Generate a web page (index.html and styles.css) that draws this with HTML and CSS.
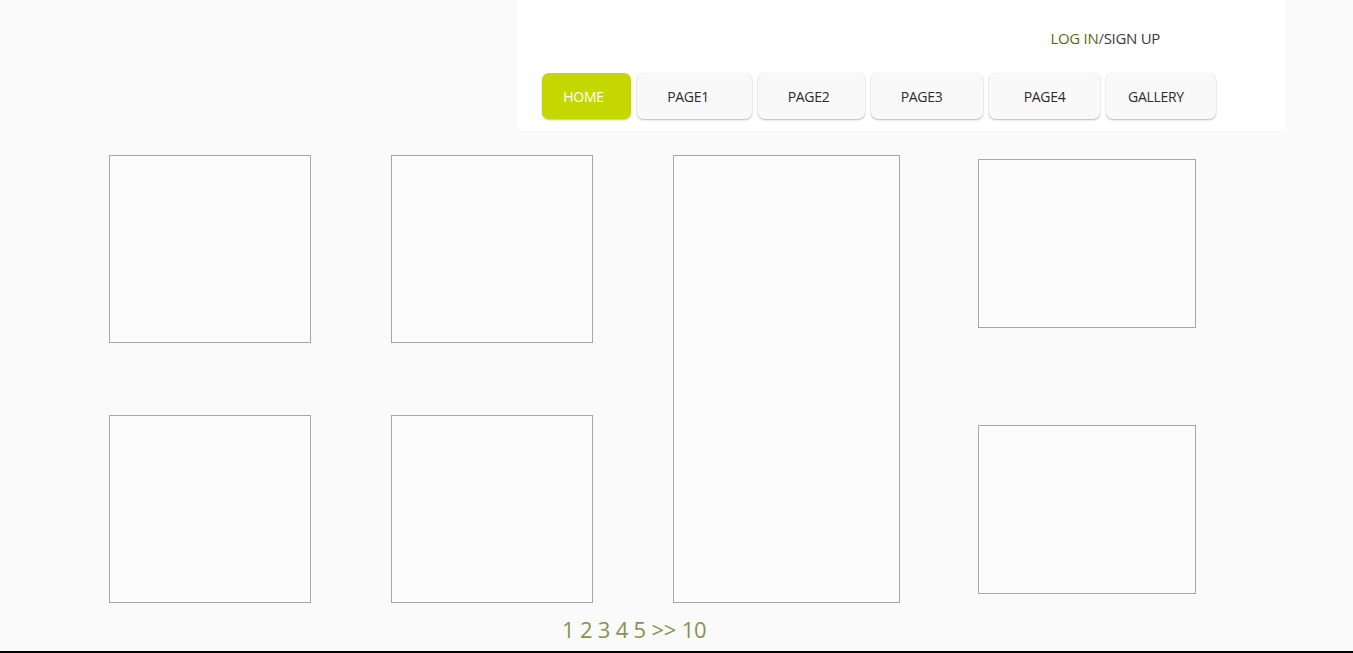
FILE: index.html
```html
<!DOCTYPE html>
<html>
<head>
<meta charset="utf-8">
<title>Gallery</title>
<link rel="stylesheet" href="styles.css">
</head>
<body>
<div class="page">
  <header class="header">
    <div class="auth"><a class="login" href="#">LOG IN</a><span class="sep">/</span><a class="signup" href="#">SIGN UP</a></div>
    <nav class="nav">
      <a class="btn active b-home" href="#">HOME</a>
      <a class="btn b-p1" href="#">PAGE1</a>
      <a class="btn b-p2" href="#">PAGE2</a>
      <a class="btn b-p3" href="#">PAGE3</a>
      <a class="btn b-p4" href="#">PAGE4</a>
      <a class="btn b-gal" href="#">GALLERY</a>
    </nav>
  </header>
  <main class="grid">
    <div class="col col-a">
      <div class="box sq"></div>
      <div class="box sq"></div>
    </div>
    <div class="col col-b">
      <div class="box sq"></div>
      <div class="box sq"></div>
    </div>
    <div class="col col-c">
      <div class="box tall"></div>
    </div>
    <div class="col col-d">
      <div class="box wide"></div>
      <div class="box wide"></div>
    </div>
  </main>
  <div class="pager">1 2 3 4 5 &gt;&gt; 10</div>
  <div class="bottom"></div>
</div>
</body>
</html>
```
FILE: styles.css
```css
html, body {
  margin: 0;
  padding: 0;
}
body {
  background: #fafafa;
  font-family: "Open Sans", "Liberation Sans", sans-serif;
}
.page {
  height: 653px;
  display: flex;
  flex-direction: column;
  overflow: hidden;
}
.header {
  margin-left: 517px;
  width: 768px;
  height: 130px;
  background: #ffffff;
  box-sizing: border-box;
  padding: 28px 0 0 25px;
  display: flex;
  flex-direction: column;
}
.auth {
  align-self: flex-end;
  margin-right: 125px;
  font-size: 15px;
  line-height: 20px;
  letter-spacing: -0.3px;
}
.auth a { text-decoration: none; }
.login { color: #5a6c08; }
.sep { color: #555; }
.signup { color: #3a3a3a; }
.nav {
  display: flex;
  gap: 6px;
  margin-top: 25px;
}
.btn {
  height: 46px;
  box-sizing: border-box;
  display: flex;
  align-items: center;
  justify-content: center;
  background: #f9f9f9;
  border-radius: 7px;
  box-shadow: 0 1px 2px rgba(0,0,0,0.28), 0 0 1px rgba(0,0,0,0.08);
  color: #2c2c2c;
  font-size: 14px;
  letter-spacing: -0.3px;
  text-decoration: none;
  padding-top: 1px;
}
.btn.active {
  background: #c4d800;
  color: #ffffff;
  box-shadow: 0 1px 2px rgba(100,110,0,0.4);
}
.b-home { width: 89px; padding-right: 6px; }
.b-p1 { width: 115px; padding-right: 13px; }
.b-p2 { width: 107px; padding-right: 6px; }
.b-p3 { width: 112px; padding-right: 11px; }
.b-p4 { width: 111px; }
.b-gal { width: 110px; padding-right: 10px; }
.grid {
  display: flex;
  margin: 25px 0 0 109px;
}
.col {
  display: flex;
  flex-direction: column;
}
.box {
  border: 1px solid #a6a6a6;
  background: #fcfcfc;
  box-sizing: border-box;
}
.col-a, .col-b { gap: 72px; }
.col-b { margin-left: 80px; }
.col-c { margin-left: 80px; }
.col-d { margin-left: 78px; margin-top: 4px; gap: 97px; }
.sq { width: 202px; height: 188px; }
.tall { width: 227px; height: 448px; }
.wide { width: 218px; height: 169px; }
.pager {
  margin: 11px 0 0 562px;
  font-size: 22px;
  line-height: 30px;
  color: #87944f;
  letter-spacing: -0.2px;
}
.bottom {
  margin-top: auto;
  height: 2px;
  background: #000;
}
```
